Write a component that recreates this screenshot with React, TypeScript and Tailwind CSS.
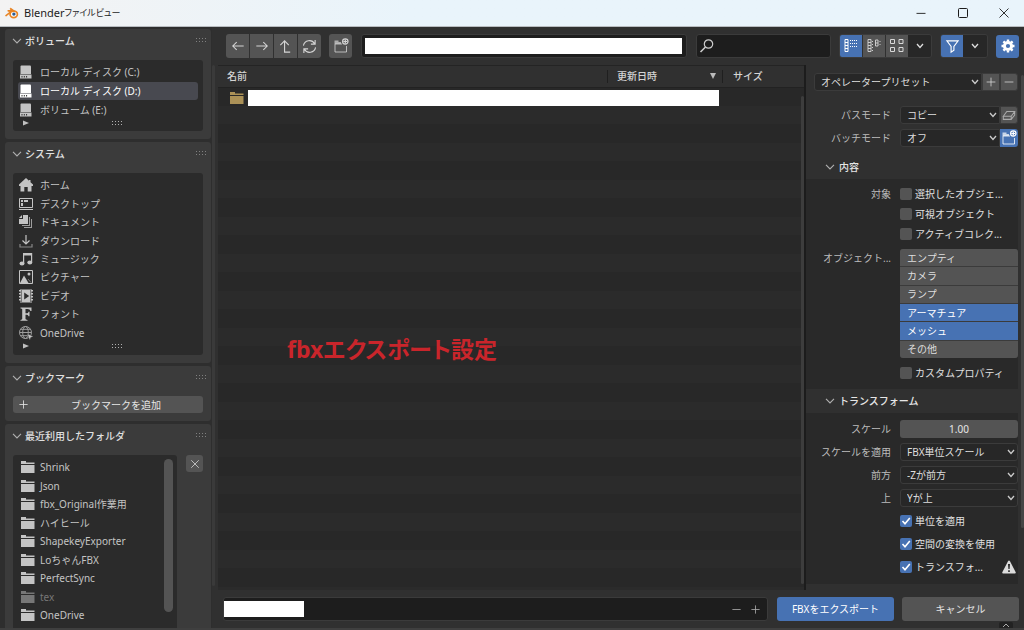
import React from "react";

const volumes = [
  { name: "ローカル ディスク (C:)", active: false },
  { name: "ローカル ディスク (D:)", active: true },
  { name: "ボリューム (E:)", active: false },
];

const systemItems = [
  { name: "ホーム", icon: "home" },
  { name: "デスクトップ", icon: "desktop" },
  { name: "ドキュメント", icon: "documents" },
  { name: "ダウンロード", icon: "download" },
  { name: "ミュージック", icon: "music" },
  { name: "ピクチャー", icon: "picture" },
  { name: "ビデオ", icon: "video" },
  { name: "フォント", icon: "font" },
  { name: "OneDrive", icon: "web" },
];

const recents = [
  "Shrink",
  "Json",
  "fbx_Original作業用",
  "ハイヒール",
  "ShapekeyExporter",
  "LoちゃんFBX",
  "PerfectSync",
  "tex",
  "OneDrive",
  "",
];

const objectTypes = [
  { name: "エンプティ", on: false },
  { name: "カメラ", on: false },
  { name: "ランプ", on: false },
  { name: "アーマチュア", on: true },
  { name: "メッシュ", on: true },
  { name: "その他", on: false },
];

const icons: Record<string, React.ReactNode> = {
  disk: (
    <g>
      <path d="M2.500 .5h8.500q1 0 1 1v7.500H1.500V1.500q0-1 1-1z" fill="currentColor" />
      <path d="M1 9.500h11.500v4H1z" fill="currentColor" />
      <path d="M2.500 11h1v1.500h-1zM4.800 11h1v1.500h-1zM7.100 11h1v1.500h-1z" fill="#2b2b2b" />
    </g>
  ),
  home: <path d="M7 0L0 6.500V8h1.500v5.500h3.800V9h3.400v4.500h3.800V8H14V6.500L11.500 4.200V2H10v.8z" fill="currentColor" />,
  desktop: (
    <g fill="none" stroke="currentColor">
      <path d="M.5 1.500h13v9H.5zM0 12.500h14" />
      <path d="M2 3h2v2H2zM5 3h4v2H5zM2 6h2v3H2z" fill="currentColor" stroke="none" />
    </g>
  ),
  documents: (
    <g fill="currentColor">
      <path d="M4 0h5v9H0V4h4z" />
      <path d="M0 3l3-3v3z" />
      <path d="M10 2h1v9H3v-1h7zM12 4h1v9H5v-1h7z" opacity=".75" />
    </g>
  ),
  download: (
    <g fill="none" stroke="currentColor" strokeWidth="1.2">
      <path d="M7 1v9M3.500 6.500L7 10l3.500-3.500" />
      <path d="M1 10v3h12v-3" opacity=".6" />
    </g>
  ),
  music: (
    <g fill="currentColor">
      <path d="M4 1h9v2.500H4z" />
      <path d="M4 1h1.200v10H4zM12 1h1.200v9H12z" />
      <ellipse cx="3" cy="11.500" rx="2.500" ry="2" />
      <ellipse cx="10.800" cy="10.500" rx="2.500" ry="2" />
    </g>
  ),
  picture: (
    <g fill="none" stroke="currentColor">
      <path d="M.5 .5h13v13H.5z" />
      <path d="M1 13L5 5.500 9.500 13z" fill="currentColor" stroke="none" />
      <circle cx="10" cy="4" r="1.500" fill="currentColor" stroke="none" />
      <path d="M9 9l3 3.500" opacity=".5" />
    </g>
  ),
  video: (
    <g fill="currentColor">
      <path fillRule="evenodd" d="M3 .5h8v13H3zM5.200 3.500v7L10.200 7z" />
      <path d="M0 1h2v1.500H0zM0 4h2v1.500H0zM0 7h2v1.500H0zM0 10h2v1.500H0zM12 1h2v1.500h-2zM12 4h2v1.500h-2zM12 7h2v1.500h-2zM12 10h2v1.500h-2z" />
      <path d="M1.500 0h1v14h-1zM11.500 0h1v14h-1z" />
    </g>
  ),
  font: <path d="M1.500 .5h11v3.500h-1Q11 2 8.500 2H6.500v4.300h1.500q1.300 0 1.500-1.500h1v4.500h-1Q9.300 7.800 8 7.800H6.500V12q0 .8 2 .9v.8h-7v-.8Q3.200 12.800 3.200 12V2.300q0-.8-1.700-.9z" fill="currentColor" />,
  web: (
    <g fill="none" stroke="currentColor" strokeWidth="1">
      <g opacity=".75">
        <circle cx="6.500" cy="6.500" r="6" />
        <ellipse cx="6.500" cy="6.500" rx="2.800" ry="6" />
        <path d="M.5 6.500h12M1.500 3.300h10M1.500 9.700h10" />
      </g>
      <path d="M8 7.500l6.500 3-2.700 1L10.800 14.500z" fill="currentColor" stroke="#2b2b2b" strokeWidth=".5" />
    </g>
  ),
  folder: <path d="M0 1h5v1.500h8.500V4H0zM0 5h13.500v8H0z" fill="currentColor" />,
};

const Icon = ({ name }: { name: string }) => (
  <svg viewBox="0 0 14 14" className="size-[14px] shrink-0" aria-hidden="true">
    {icons[name]}
  </svg>
);

const Chevron = ({ className = "" }: { className?: string }) => (
  <svg viewBox="0 0 8 6" className={`h-[6px] w-2 shrink-0 ${className}`} aria-hidden="true">
    <path d="M1 1l3 3.500L7 1" fill="none" stroke="currentColor" strokeWidth="1.300" />
  </svg>
);

// thinner and wider than the drop-down arrow
const PanelChevron = ({ className = "" }: { className?: string }) => (
  <svg viewBox="0 0 10 6" className={`h-[6px] w-[10px] shrink-0 text-[#b0b0b0] ${className}`} aria-hidden="true">
    <path d="M1 .8l4 4.200L9 .8" fill="none" stroke="currentColor" strokeWidth="1.100" />
  </svg>
);

const Line = ({ d, size = 16 }: { d: string; size?: number }) => (
  <svg viewBox="0 0 16 16" width={size} height={size} aria-hidden="true">
    <path d={d} fill="none" stroke="currentColor" strokeWidth="1.200" />
  </svg>
);

const NewFolderIcon = () => (
  <svg viewBox="0 0 16 16" className="size-4" aria-hidden="true">
    <path d="M2 6v8h11.500V8M2 6h7" fill="none" stroke="currentColor" opacity=".8" />
    <path d="M1.500 2.500h4V4H8v2H1.500z" fill="currentColor" opacity=".7" />
    <circle cx="12.300" cy="3.500" r="2.700" fill="none" stroke="currentColor" strokeWidth="1.200" />
    <path d="M12.300 1.500v4M10.300 3.500h4" stroke="currentColor" strokeWidth="1.200" />
  </svg>
);

const Grip = () => (
  <svg viewBox="0 0 10 5" className="h-[5px] w-[10px]" aria-hidden="true">
    <path d="M0 .5h10M0 3.500h10" stroke="currentColor" strokeDasharray="1 2" />
  </svg>
);

const Panel = ({ title, className = "", children }: { title: string; className?: string; children: React.ReactNode }) => (
  <section className={`shrink-0 rounded-[3px] bg-[#3b3b3b] px-2 ${className}`}>
    <h2 className="flex h-[23px] items-center text-[#e0e0e0]">
      <PanelChevron className="-ml-px mr-[3px]" />
      <span className="flex-1 font-medium">{title}</span>
      <span className="-mr-[3px] text-[#808080]"><Grip /></span>
    </h2>
    {children}
  </section>
);

const ListFoot = () => (
  <div className="flex h-2 items-center text-[#b0b0b0]">
    <svg viewBox="0 0 6 6" className="ml-[5px] size-[6px]" aria-hidden="true">
      <path d="M0 .5l6 2.500-6 2.500z" fill="#c0c0c0" />
    </svg>
    <span className="flex flex-1 justify-center pl-[7px]"><Grip /></span>
  </div>
);

const Dropdown = ({ label, value, className = "" }: { label: string; value: string; className?: string }) => (
  <span className={`relative flex h-[18px] min-w-0 flex-1 items-center rounded-[3px] border border-[#3b3b3b] bg-[#272727] text-[#dedede] ${className}`}>
    <select aria-label={label} className="h-full w-full appearance-none bg-transparent pl-[6px] pr-4 outline-none">
      <option>{value}</option>
    </select>
    <Chevron className="pointer-events-none absolute right-[2px] text-[#ccc]" />
  </span>
);

const Field = ({ label, children }: { label: string; children?: React.ReactNode }) => (
  <div className="flex items-start">
    <span className="w-[85px] shrink-0 text-right leading-[18px] text-[#bcbcbc]">{label}</span>
    <div className="ml-[9px] flex min-w-0 flex-1">{children}</div>
  </div>
);

const Check = ({ label, checked = false }: { label: string; checked?: boolean }) => (
  <label className="flex h-[18px] items-center text-[#e0e0e0]">
    <span className="relative flex size-3">
      <input type="checkbox" defaultChecked={checked} className="peer size-3 appearance-none rounded-[2px] bg-[#545454] checked:bg-[#4772b3]" />
      <svg viewBox="0 0 12 12" className="pointer-events-none absolute inset-0 hidden peer-checked:block" aria-hidden="true">
        <path d="M2.500 6l2.500 2.800L9.800 3" fill="none" stroke="#fff" strokeWidth="1.600" />
      </svg>
    </span>
    <span className="ml-[3px] whitespace-nowrap">{label}</span>
  </label>
);

const SubHeader = ({ title }: { title: string }) => (
  <h3 className="flex h-6 items-center bg-[#303030] pl-[19px] text-[#e6e6e6]">
    <PanelChevron className="mr-1" />
    <span className="font-medium">{title}</span>
  </h3>
);

const TitleBar = () => (
  <header className="flex h-[27px] shrink-0 items-center border-b border-[#b8bcc0] bg-linear-to-r from-[#f3f3f3] to-[#e9f4fb] to-40% pl-[5px] text-[#1c1c1c]">
    <svg viewBox="0 0 16 14" className="mr-[5px] h-3 w-[14px]" aria-hidden="true">
      <path d="M1 10L8 4.500H3.500M8 4.500L6 1.500l5 3.500" fill="none" stroke="#e88424" strokeWidth="1.800" strokeLinecap="round" />
      <ellipse cx="10" cy="8.500" rx="4.300" ry="3.800" fill="#fff" stroke="#e88424" strokeWidth="2" />
      <circle cx="10.200" cy="8.300" r="2" fill="#2b5c94" />
    </svg>
    <h1 className="flex flex-1 items-center text-[11px]">
      Blender<span className="text-[9px] [font-feature-settings:'palt']">ファイルビュー</span>
    </h1>
    <div className="flex h-full pr-[-2px]">
      <button aria-label="最小化" className="flex h-full w-[42px] items-center justify-center">
        <Line d="M2 8.500h12" size={12} />
      </button>
      <button aria-label="最大化" className="flex h-full w-[42px] items-center justify-center">
        <svg viewBox="0 0 10 10" className="size-[10px]"><rect x=".5" y=".5" width="9" height="9" rx="1" fill="none" stroke="currentColor" /></svg>
      </button>
      <button aria-label="閉じる" className="flex h-full w-10 items-center justify-center">
        <Line d="M2 2l12 12M14 2L2 14" size={12} />
      </button>
    </div>
  </header>
);

const Sidebar = () => (
  <aside className="flex w-[212px] shrink-0 flex-col gap-[3px] overflow-hidden bg-[#2e2e2e] pl-[5px] pr-px pt-[2px]">
    <Panel title="ボリューム" className="h-[110px]">
      <div className="mt-2 flex h-[71px] flex-col rounded-[3px] bg-[#2b2b2b] px-[5px] pt-[3px]">
        <ul className="flex h-14 flex-col">
          {volumes.map((volume) => (
            <li
              key={volume.name}
              className={`flex flex-1 items-center gap-[7px] rounded-[3px] pl-px ${
                volume.active ? "bg-[#484950] text-white" : "text-[#c4c4c4]"
              }`}
            >
              <Icon name="disk" />
              {volume.name}
            </li>
          ))}
        </ul>
        <ListFoot />
      </div>
    </Panel>

    <Panel title="システム" className="h-[221px]">
      <div className="mt-2 flex h-[182px] flex-col rounded-[3px] bg-[#2b2b2b] px-[5px] pt-[3px]">
        <ul className="flex h-[166px] flex-col text-[#c4c4c4]">
          {systemItems.map((item) => (
            <li key={item.name} className="flex flex-1 items-center gap-[7px] pl-px">
              <Icon name={item.icon} />
              {item.name}
            </li>
          ))}
        </ul>
        <ListFoot />
      </div>
    </Panel>

    <Panel title="ブックマーク" className="h-[55px]">
      <button className="mt-[7px] flex h-[17px] w-full items-center rounded-[3px] bg-[#545454] text-[#e6e6e6]">
        <span className="ml-[5px]"><Line d="M8 2v12M2 8h12" size={11} /></span>
        <span className="flex-1">ブックマークを追加</span>
      </button>
    </Panel>

    <Panel title="最近利用したフォルダ" className="flex-1">
      <div className="mt-2 flex items-start gap-[9px]">
        <div className="flex h-[190px] flex-1 rounded-[3px] bg-[#2b2b2b] pl-2 pt-[3px]">
          <ul className="flex h-[185px] flex-1 flex-col text-[#c4c4c4]">
            {recents.map((name, index) => (
              <li key={index} className={`flex flex-1 items-center gap-[5px] ${name === "tex" ? "text-[#777]" : ""}`}>
                <Icon name="folder" />
                {name}
              </li>
            ))}
          </ul>
          <div className="mr-1 mt-px h-[153px] w-[9px] rounded-full bg-[#545454]" />
        </div>
        <button aria-label="クリア" className="flex size-[17px] items-center justify-center rounded-[3px] bg-[#545454] text-[#ddd]">
          <Line d="M2 2l12 12M14 2L2 14" size={10} />
        </button>
      </div>
    </Panel>
  </aside>
);

const toolButton = "flex h-6 w-[23px] items-center justify-center bg-[#545454] text-[#d4d4d4]";

const Toolbar = () => (
  <div className="flex h-[38px] shrink-0 items-center pl-[14px] pr-[5px]">
    <div className="flex gap-px overflow-hidden rounded-[3px]">
      <button aria-label="戻る" className={toolButton}><Line d="M14.500 8H2M6.500 3.500L2 8l4.500 4.500" size={14} /></button>
      <button aria-label="進む" className={toolButton}><Line d="M1.500 8H14M9.500 3.500L14 8l-4.500 4.500" size={14} /></button>
      <button aria-label="上へ" className={toolButton}><Line d="M7 2v12h6M2.500 6.500L7 2l4.500 4.500" size={15} /></button>
      <button aria-label="更新" className={toolButton}>
        <Line d="M1.500 7A6.500 6.500 0 0 1 13.500 5M14 1v4.500H9.500M14.500 9A6.500 6.500 0 0 1 2.500 11M2 15v-4.500h4.500" size={15} />
      </button>
    </div>
    <button aria-label="新規フォルダ" className={`${toolButton} ml-2 rounded-[3px]`}><NewFolderIcon /></button>
    <div className="ml-[9px] flex h-6 min-w-0 flex-1 items-center rounded-[3px] border border-[#3b3b3b] bg-[#1d1d1d] pl-[3px] pr-1">
      <input type="text" aria-label="パス" className="h-4 w-full bg-white text-black outline-none" />
    </div>
    <div className="ml-[9px] flex h-6 w-[135px] items-center rounded-[3px] border border-[#3b3b3b] bg-[#1d1d1d] pl-[2px] text-[#ccc]">
      <svg viewBox="0 0 16 16" className="size-4 shrink-0" aria-hidden="true">
        <circle cx="9.500" cy="6" r="4.200" fill="none" stroke="currentColor" strokeWidth="1.200" />
        <path d="M6.500 9L1.500 14" stroke="currentColor" strokeWidth="1.600" />
      </svg>
      <input type="text" aria-label="検索" className="h-full w-full min-w-0 bg-transparent outline-none" />
    </div>
    <div className="ml-2 flex overflow-hidden rounded-[3px] border border-[#3b3b3b]">
      <button aria-label="縦のリスト" className="flex h-[22px] w-[22px] items-center justify-center bg-[#4772b3] text-white">
        <svg viewBox="0 0 14 14" className="size-[14px]" fill="none" stroke="currentColor">
          <path d="M1 .5h3v12H1zM1 3.500h3M1 6.500h3M1 9.500h3" />
          <path d="M6 1.500h8M6 4.500h8M6 7.500h8" strokeDasharray="1 1" />
        </svg>
      </button>
      <button aria-label="横のリスト" className="ml-px flex h-[22px] w-[22px] items-center justify-center bg-[#545454] text-[#ccc]">
        <svg viewBox="0 0 14 14" className="size-[14px]" fill="none" stroke="currentColor">
          <path d="M1 .5h3v12H1zM1 3.500h3M1 6.500h3M1 9.500h3M8.500 1h2.500v6H8.500zM8.500 4H11" />
          <path d="M5.500 2v10M13 2v5" strokeDasharray="1 2" />
        </svg>
      </button>
      <button aria-label="サムネイル" className="ml-px flex h-[22px] w-[22px] items-center justify-center bg-[#545454] text-[#d8d8d8]">
        <svg viewBox="0 0 14 14" className="size-[14px]" fill="none" stroke="currentColor">
          <path d="M.5 .5h4v4h-4zM9 .5h4v4H9zM.5 8.500h4v4h-4zM9 8.500h4v4H9z" />
        </svg>
      </button>
      <button aria-label="表示設定" className="flex h-[22px] w-[23px] items-center justify-center bg-[#272727] text-[#ddd]">
        <Chevron />
      </button>
    </div>
    <div className="ml-2 flex overflow-hidden rounded-[3px] border border-[#3b3b3b]">
      <button aria-label="フィルター" className="flex h-[22px] w-[22px] items-center justify-center bg-[#4772b3] text-white">
        <Line d="M2 2h12L9.500 8v4L6.500 14V8z" size={15} />
      </button>
      <button aria-label="フィルター設定" className="flex h-[22px] w-6 items-center justify-center bg-[#272727] text-[#ddd]">
        <Chevron />
      </button>
    </div>
    <button aria-label="オプション" className="ml-2 flex h-[23px] w-[23px] items-center justify-center rounded-[3px] bg-[#4772b3] text-white">
      <svg viewBox="0 0 16 16" className="size-4" aria-hidden="true">
        <circle cx="8" cy="8" r="3.600" fill="none" stroke="currentColor" strokeWidth="3" />
        <path d="M8 1.500v2M8 12.500v2M1.500 8h2M12.500 8h2M3.400 3.400l1.500 1.500M11.100 11.100l1.500 1.500M3.400 12.600l1.500-1.500M11.100 4.900l1.500-1.500" stroke="currentColor" strokeWidth="2.400" />
      </svg>
    </button>
  </div>
);

const FileList = () => (
  <main className="relative flex min-w-0 flex-1 border-r-2 border-[#1c1c1c]">
    <div className="mb-1 w-[3px] shrink-0 rounded-full bg-[#3a3a3a]" />
    <div className="ml-[3px] min-w-0 flex-1 border-t border-[#242424] bg-[repeating-linear-gradient(#282828_0_3px,#2b2b2b_3px_21px,#282828_21px_37px)]">
      <table className="w-full table-fixed border-collapse">
        <thead className="bg-[#303030] text-left text-[#d4d4d4]">
          <tr className="h-[21px] border-b border-[#222]">
            <th className="pl-[9px] font-medium">名前</th>
            <th className="w-[115px] font-medium">
              <span className="flex h-[13px] items-center justify-between border-l border-[#1f1f1f] pl-[9px] pr-[6px]">
                更新日時
                <svg viewBox="0 0 6 6" className="size-[6px]" aria-hidden="true"><path d="M0 0h6L3 6z" fill="#bbb" /></svg>
              </span>
            </th>
            <th className="w-[82px] font-medium">
              <span className="flex h-[13px] items-center border-l border-[#1f1f1f] pl-[10px]">サイズ</span>
            </th>
          </tr>
        </thead>
        <tbody>
          <tr className="h-[22px]">
            <td colSpan={3} className="pl-3 pr-[85px]">
              <span className="flex items-center gap-1 text-[#ab9157]">
                <Icon name="folder" />
                <span className="h-4 flex-1 bg-white" />
              </span>
            </td>
          </tr>
        </tbody>
      </table>
    </div>
    <div className="absolute bottom-[6px] right-0 top-[31px] w-[3px] rounded-full bg-[#3d3d3d]" />
    <p className="absolute left-[75px] top-[266px] whitespace-nowrap text-[23px] font-bold leading-9 text-[#c9252b] [font-feature-settings:'palt']">
      fbxエクスポート設定
    </p>
  </main>
);

const iconButton = "flex size-[18px] shrink-0 items-center justify-center border border-[#3b3b3b] bg-[#545454] text-[#ddd]";

const ExportOptions = () => (
  <aside className="flex w-[218px] shrink-0">
    <div className="min-w-0 flex-1">
      <div className="flex flex-col pb-2 pt-2">
        <div className="flex pl-2">
          <Dropdown label="オペレータープリセット" value="オペレータープリセット" className="rounded-r-none" />
          <button aria-label="追加" className={iconButton}><Line d="M8 1v14M1 8h14" size={10} /></button>
          <button aria-label="削除" className={`${iconButton} rounded-r-[3px]`}><Line d="M1 8h14" size={10} /></button>
        </div>
        <div className="mt-[15px] flex flex-col gap-[5px]">
          <Field label="パスモード">
            <Dropdown label="パスモード" value="コピー" className="rounded-r-none" />
            <button aria-label="テクスチャを埋め込む" className="flex size-[18px] shrink-0 items-center justify-center rounded-r-[3px] border border-[#3b3b3b] bg-[#545454] text-[#aaa]">
              <Line d="M1.500 9.500L5.500 4h9l-4 5.500zM1.500 9.500V13h9V9.500M10.500 13l4-5V4" size={14} />
            </button>
          </Field>
          <Field label="バッチモード">
            <Dropdown label="バッチモード" value="オフ" className="rounded-r-none" />
            <button aria-label="バッチ用フォルダ" className="flex size-[18px] shrink-0 items-center justify-center rounded-r-[3px] bg-[#4772b3] text-white">
              <NewFolderIcon />
            </button>
          </Field>
        </div>
      </div>

      <SubHeader title="内容" />
      <div className="bg-[#292929] pb-[7px] pt-[6px]">
        <Field label="対象">
          <div className="flex flex-col gap-[2px]">
            <Check label="選択したオブジェ..." />
            <Check label="可視オブジェクト" />
            <Check label="アクティブコレク..." />
          </div>
        </Field>
        <div className="mt-[6px]">
          <Field label="オブジェクト...">
            <div className="flex h-[109px] flex-1 flex-col gap-px overflow-hidden rounded-[3px] bg-[#3b3b3b]">
              {objectTypes.map((type) => (
                <button
                  key={type.name}
                  className={`flex flex-1 items-center pl-[7px] ${type.on ? "bg-[#4772b3] text-white" : "bg-[#545454] text-[#dedede]"}`}
                >
                  {type.name}
                </button>
              ))}
            </div>
          </Field>
        </div>
        <div className="mt-[6px]">
          <Field label=""><Check label="カスタムプロパティ" /></Field>
        </div>
      </div>

      <SubHeader title="トランスフォーム" />
      <div className="flex flex-col gap-[5px] bg-[#292929] pb-2 pt-[7px]">
        <Field label="スケール">
          <input
            type="text"
            aria-label="スケール"
            defaultValue="1.00"
            className="h-[18px] w-full rounded-[3px] bg-[#545454] text-center text-[#e6e6e6] outline-none"
          />
        </Field>
        <Field label="スケールを適用"><Dropdown label="スケールを適用" value="FBX単位スケール" /></Field>
        <Field label="前方"><Dropdown label="前方" value="-Zが前方" /></Field>
        <Field label="上"><Dropdown label="上" value="Yが上" /></Field>
        <Field label=""><Check label="単位を適用" checked /></Field>
        <Field label=""><Check label="空間の変換を使用" checked /></Field>
        <Field label="">
          <div className="flex flex-1 items-center justify-between pr-[2px]">
            <Check label="トランスフォ..." checked />
            <svg viewBox="0 0 14 14" className="size-[14px]" aria-hidden="true">
              <path d="M7 .5q.6 0 1 .8l5.700 11q.4 1.200-.8 1.200H1.100q-1.200 0-.8-1.200l5.700-11q.4-.8 1-.8z" fill="#dcdcdc" />
              <path d="M6 4h2l-.4 5H6.400zM6.200 10.300h1.600v1.600H6.200z" fill="#292929" />
            </svg>
          </div>
        </Field>
      </div>
    </div>
    <div className="ml-[3px] mt-[10px] h-[453px] w-[3px] rounded-full bg-[#454545]" />
  </aside>
);

const Footer = () => (
  <footer className="relative flex h-[38px] shrink-0 items-center pl-[11px] pr-[5px]">
    <div className="flex h-6 min-w-0 flex-1 items-center rounded-[3px] border border-[#3b3b3b] bg-[#1d1d1d] pr-[6px] text-[#aaa]">
      <input type="text" aria-label="ファイル名" className="h-4 w-20 bg-white text-black outline-none" />
      <button aria-label="番号を減らす" className="ml-auto mr-2"><Line d="M2 8h12" size={11} /></button>
      <button aria-label="番号を増やす"><Line d="M8 2v12M2 8h12" size={11} /></button>
    </div>
    <button className="ml-[9px] h-6 w-[117px] rounded-[3px] bg-[#4772b3] text-white">FBXをエクスポート</button>
    <button className="ml-2 h-6 w-[117px] rounded-[3px] bg-[#545454] text-[#e6e6e6]">キャンセル</button>
    <svg viewBox="0 0 14 6" className="absolute bottom-0 right-[11px] h-[6px] w-[14px]" aria-hidden="true">
      <path d="M0 6V2q0-2 2-2h10q2 0 2 2v4z" fill="#222" />
      <path d="M4 5l3-3 3 3" fill="none" stroke="#aaa" />
    </svg>
  </footer>
);

const App = () => {
  return (
    <div className="flex h-screen flex-col overflow-hidden bg-[#303030] font-['Noto_Sans','Noto_Sans_CJK_JP',sans-serif] text-[10px] leading-[14px]">
      <TitleBar />
      <div className="flex min-h-0 flex-1 border-b-2 border-[#3f3f3f]">
        <Sidebar />
        <div className="flex min-w-0 flex-1 flex-col">
          <Toolbar />
          <div className="flex min-h-0 flex-1">
            <FileList />
            <ExportOptions />
          </div>
          <Footer />
        </div>
      </div>
    </div>
  );
};

export default App;
